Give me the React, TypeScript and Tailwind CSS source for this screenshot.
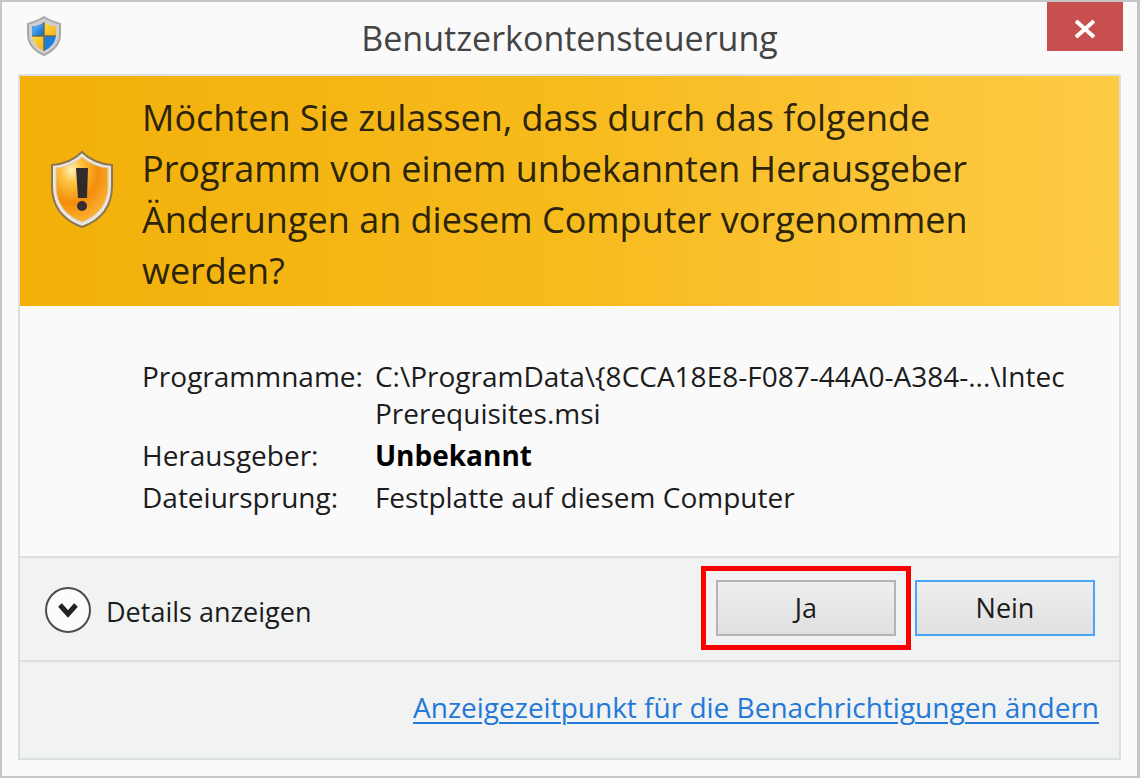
import React from 'react';

const details = [
  { label: 'Programmname:', value: 'C:\\ProgramData\\{8CCA18E8-F087-44A0-A384-...\\Intec Prerequisites.msi' },
  { label: 'Herausgeber:', value: 'Unbekannt', bold: true },
  { label: 'Dateiursprung:', value: 'Festplatte auf diesem Computer' },
];

const UacShield: React.FC = () => (
  <svg className="w-9 h-10" viewBox="0 0 36 40" aria-hidden="true">
    <defs>
      <clipPath id="uac-inner">
        <path d="M18 6C14 9 10 10 6 10.500V18C6 25 10 31 18 35C26 31 30 25 30 18V10.500C26 10 22 9 18 6Z" />
      </clipPath>
      <linearGradient id="uac-blue" x1="0" y1="0" x2="1" y2="1">
        <stop offset="0" stopColor="#1769bd" />
        <stop offset="0.450" stopColor="#4aa6ee" />
        <stop offset="1" stopColor="#0c62c4" />
      </linearGradient>
      <linearGradient id="uac-yellow" x1="0" y1="0" x2="1" y2="1">
        <stop offset="0" stopColor="#ffdf52" />
        <stop offset="1" stopColor="#f2ae10" />
      </linearGradient>
    </defs>
    <path d="M18 1C13 4.500 8 6 2 8V18C2 28 9 35 18 39C27 35 34 28 34 18V8C28 6 23 4.500 18 1Z" fill="#cfcfcf" stroke="#a8a8aa" strokeWidth="2" />
    <g clipPath="url(#uac-inner)">
      <rect x="4" y="3" width="14" height="17" fill="url(#uac-blue)" />
      <rect x="18" y="3" width="14" height="17" fill="url(#uac-yellow)" />
      <rect x="4" y="20" width="14" height="17" fill="url(#uac-yellow)" />
      <rect x="18" y="20" width="14" height="17" fill="#1b7fdf" />
      <path d="M18 3V37M4 20H32" stroke="#6f6a50" strokeWidth="1.500" />
    </g>
  </svg>
);

const WarningShield: React.FC = () => (
  <svg className="w-16 h-20" viewBox="0 0 64 80" aria-hidden="true">
    <defs>
      <radialGradient id="warn-fill" cx="0.300" cy="0.200" r="0.850">
        <stop offset="0" stopColor="#fff0b8" />
        <stop offset="0.250" stopColor="#fcc03a" />
        <stop offset="0.600" stopColor="#f38e0c" />
        <stop offset="1" stopColor="#fbb436" />
      </radialGradient>
    </defs>
    <path d="M32 2C25 9 16 14 2 15V36C2 56 13 70 32 77C51 70 62 56 62 36V15C48 14 39 9 32 2Z" fill="#ece6e0" stroke="#8b7650" strokeWidth="2" />
    <path d="M32 7C25 13 16 17 6 18V36C6 54 16 66 32 72C48 66 58 54 58 36V18C48 17 39 13 32 7Z" fill="url(#warn-fill)" stroke="#dccbad" strokeWidth="1" />
    <path d="M26 18H38L37 48H28Z" fill="#302a2c" />
    <circle cx="32" cy="56" r="5" fill="#352a38" />
  </svg>
);

const App: React.FC = () => (
  <main className="bg-[#fafafa] border-2 border-r-3 border-[#c5c5c5] text-[#1c1c1c] font-['Open_Sans','Noto_Sans',sans-serif]">
    <header className="grid grid-cols-[1fr_auto_1fr] items-start h-18">
      <div className="pl-6 pt-3.5">
        <UacShield />
      </div>
      <h1 className="pt-3 text-[34px] leading-12 text-[#444]">Benutzerkontensteuerung</h1>
      <button type="button" aria-label="Schließen" className="justify-self-end mr-3.5 w-19 h-[49px] pt-1 flex items-center justify-center bg-[#c74f4f]">
        <svg className="w-5 h-5" viewBox="0 0 20 20" stroke="#fff" strokeWidth="4" aria-hidden="true">
          <path d="M1 2L19 18M19 2L1 18" />
        </svg>
      </button>
    </header>

    <div className="mx-4 mb-4 border-2 border-[#dcdfe2]">
      <section className="flex items-start bg-linear-to-r from-[#f2b007] via-[#f7bb1c] to-[#ffcb44] pt-4 pb-2.5 pl-[30px] pr-30">
        <div className="w-23 shrink-0 pt-14.5">
          <WarningShield />
        </div>
        <h2 className="text-[36px] leading-[51px] text-[#2b2408]">
          Möchten Sie zulassen, dass durch das folgende Programm von einem unbekannten Herausgeber Änderungen an diesem Computer vorgenommen werden?
        </h2>
      </section>

      <dl className="grid grid-cols-[auto_1fr] gap-x-3 gap-y-[5px] pl-[122px] pr-10 pt-13 pb-10 text-[28px] leading-[37px]">
        {details.map((d) => (
          <React.Fragment key={d.label}>
            <dt>{d.label}</dt>
            <dd className={d.bold ? 'font-bold text-black' : ''}>{d.value}</dd>
          </React.Fragment>
        ))}
      </dl>

      <section className="flex items-center justify-between bg-[#f1f2f2] border-t-2 border-[#dedede] pl-6 pr-6 pt-2 pb-2.5 text-[27px]">
        <button type="button" className="flex items-center gap-3.5 pt-1">
          <svg className="w-12 h-12" viewBox="0 0 48 48" fill="none" aria-hidden="true">
            <circle cx="24" cy="24" r="22" fill="#fcfcfc" stroke="#4c4c4c" strokeWidth="2" />
            <path d="M16 19L24 28L32 19" stroke="#222" strokeWidth="5" />
          </svg>
          <span className="pt-1">Details anzeigen</span>
        </button>
        <div className="flex items-center gap-1">
          <div className="border-5 border-[#fe0000] px-2.5 py-[9px]">
            <button type="button" className="block w-45 h-14 border-2 border-[#b4b4b4] bg-linear-to-b from-[#efefef] to-[#e0e0e0]">Ja</button>
          </div>
          <button type="button" className="w-45 h-14 border-2 border-[#4ba4f7] bg-linear-to-b from-[#efefef] to-[#e0e0e0]">Nein</button>
        </div>
      </section>

      <footer className="bg-[#f1f2f2] border-t-2 border-[#dedede] pt-6 pb-[30px] pr-5 text-right text-[28px] leading-[42px]">
        <a href="#benachrichtigungen" className="text-[#2478d8] underline underline-offset-4 decoration-2">
          Anzeigezeitpunkt für die Benachrichtigungen ändern
        </a>
      </footer>
    </div>
  </main>
);

export default App;
